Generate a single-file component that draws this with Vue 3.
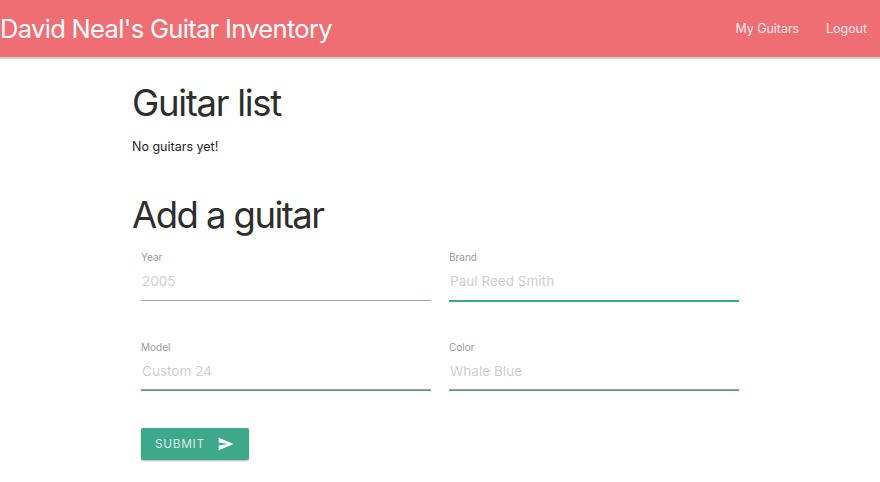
<script setup>
const fields = [
  { id: 'year', label: 'Year', placeholder: '2005', state: 'plain' },
  { id: 'brand', label: 'Brand', placeholder: 'Paul Reed Smith', state: 'valid' },
  { id: 'model', label: 'Model', placeholder: 'Custom 24', state: 'valid edged' },
  { id: 'color', label: 'Color', placeholder: 'Whale Blue', state: 'valid edged' },
]
</script>

<template>
  <div class="page">
    <nav class="nav">
      <a class="brand">David Neal's Guitar Inventory</a>
      <div class="links">
        <a>My Guitars</a>
        <a>Logout</a>
      </div>
    </nav>
    <main class="container">
      <h2 class="list-title">Guitar list</h2>
      <p class="empty">No guitars yet!</p>
      <h2 class="add-title">Add a guitar</h2>
      <form class="form" @submit.prevent>
        <div class="grid">
          <div v-for="f in fields" :key="f.id" class="field">
            <label :for="f.id">{{ f.label }}</label>
            <input :id="f.id" type="text" :placeholder="f.placeholder" :class="f.state" />
          </div>
        </div>
        <button class="submit" type="submit">
          <span>SUBMIT</span>
          <svg width="16" height="16" viewBox="0 0 24 24" fill="#fff"><path d="M1 21.5L23.5 12 1 2.5v7.2L15 12 1 14.3z" /></svg>
        </button>
      </form>
    </main>
  </div>
</template>

<style>
body {
  background: #fff;
  overflow: hidden;
}
</style>

<style scoped>
.page {
  height: 482px;
  font-family: Inter, "Liberation Sans", sans-serif;
  color: #2d2d2d;
}
.nav {
  height: 57px;
  box-sizing: border-box;
  background: #ee6e73;
  color: #fff;
  display: flex;
  justify-content: space-between;
  align-items: center;
  padding-right: 13px;
  box-shadow: 0 2px 1px rgba(0, 0, 0, 0.18);
}
.brand {
  font-size: 25.5px;
  letter-spacing: -0.68px;
}
.links {
  display: flex;
  gap: 27px;
  font-size: 12.5px;
  letter-spacing: -0.05px;
  color: #fbe8e8;
}
.container {
  width: 616px;
  margin-left: 132px;
}
h2 {
  margin: 0;
  font-size: 36.5px;
  line-height: 42px;
  font-weight: 400;
  letter-spacing: -1.3px;
}
.list-title {
  padding-top: 25px;
}
.empty {
  margin: 0;
  padding-top: 13px;
  font-size: 12.5px;
  line-height: 20px;
  color: #1e1e1e;
}
.add-title {
  padding: 37px 0 1px;
  letter-spacing: -1.55px;
}
.grid {
  display: grid;
  grid-template-columns: 1fr 1fr;
  grid-auto-rows: 90px;
}
.field {
  padding: 13px 9px 0;
  display: flex;
  flex-direction: column;
}
label {
  font-size: 10px;
  line-height: 14px;
  color: #999;
}
input {
  width: 100%;
  height: 37px;
  box-sizing: border-box;
  border: 0;
  border-bottom: 1px solid #b3a38f;
  padding: 0 0 2px 1px;
  background: transparent;
  font-family: inherit;
  font-size: 13.5px;
  letter-spacing: 0.03px;
  outline: none;
}
input::placeholder {
  color: #cfcfcf;
  opacity: 1;
}
input.valid {
  height: 38px;
  border-bottom: 2px solid #3ea88a;
}
input.edged {
  height: 36px;
  padding-bottom: 2px;
  border-bottom: 1px solid #a99b91;
  box-shadow: 0 1px 0 #3ea88a;
}
.submit {
  margin: 11px 0 0 9px;
  width: 108px;
  height: 32px;
  border: 0;
  border-radius: 2px;
  background: #3ea88a;
  color: #dcebe6;
  padding: 0 15px 0 14px;
  display: flex;
  align-items: center;
  justify-content: space-between;
  font-family: inherit;
  font-size: 11.8px;
  letter-spacing: 0.7px;
  box-shadow: 0 1px 2px rgba(0, 0, 0, 0.3);
}
</style>
